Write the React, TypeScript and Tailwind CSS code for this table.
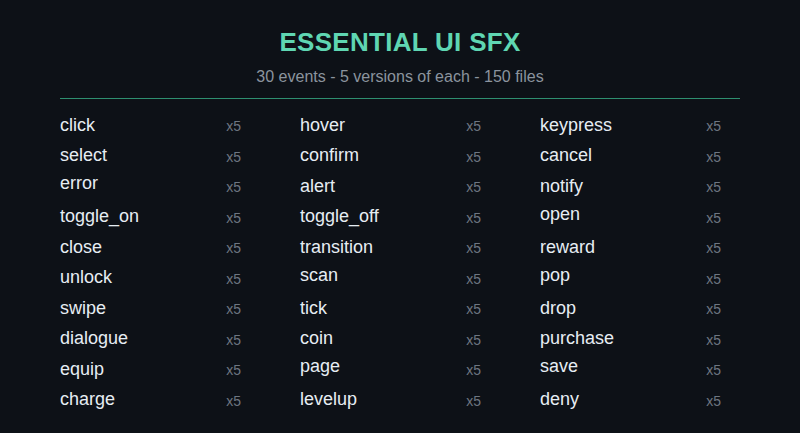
import React from "react";

const cols: string[][] = [
  ["click", "select", "error", "toggle_on", "close", "unlock", "swipe", "dialogue", "equip", "charge"],
  ["hover", "confirm", "alert", "toggle_off", "transition", "scan", "tick", "coin", "page", "levelup"],
  ["keypress", "cancel", "notify", "open", "reward", "pop", "drop", "purchase", "save", "deny"],
];

const raised = new Set(["error", "open", "scan", "pop", "page", "save"]);

export default function App() {
  return (
    <div
      className="w-[800px] h-[433px] bg-[#0d1117] overflow-hidden pt-[27px] px-[60px]"
      style={{ fontFamily: '"Liberation Sans", Arial, sans-serif' }}
    >
      <h1 className="text-center text-[26px] leading-[30px] font-bold tracking-[0.3px] text-[#5fd6b2]">
        ESSENTIAL UI SFX
      </h1>
      <p className="mt-[11px] text-center text-[16px] leading-[18px] text-[#8b949e]">
        30 events - 5 versions of each - 150 files
      </p>
      <div className="mt-[12px] h-px bg-[#2e8f70]" />
      <div className="mt-[11px] grid grid-cols-[181px_181px_181px] gap-x-[59px]">
        {cols.map((col, ci) => (
          <div key={ci} className="flex flex-col">
            {col.map((name) => (
              <div key={name} className="flex items-baseline justify-between h-[30.56px] leading-[30.56px]">
                <span
                  className={
                    "text-[18px] text-[#e6edf3] " + (raised.has(name) ? "relative -top-[3px]" : "relative -top-[0.5px]")
                  }
                >
                  {name}
                </span>
                <span className="text-[14px] text-[#6e7681]">x5</span>
              </div>
            ))}
          </div>
        ))}
      </div>
    </div>
  );
}
